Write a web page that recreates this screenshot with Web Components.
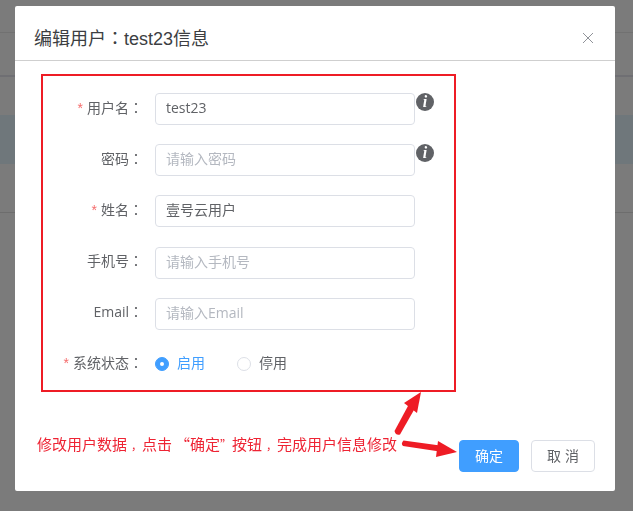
<!DOCTYPE html>
<html lang="zh-CN">
<head>
<meta charset="utf-8">
<title>编辑用户</title>
<style>
  html, body { margin: 0; height: 100%; overflow: hidden; }
  body {
    font-family: "Liberation Sans", "Noto Sans CJK SC", sans-serif;
    font-size: 14px;
    text-spacing-trim: space-all;
  }
  .colon { font-family: "Noto Sans CJK TC", sans-serif; }
  /* punctuation sits a little further right in the reference font */
  .comma { font-size: 11px; margin-left: 4px; }
  .open-quote { margin-left: 3px; }
  .close-quote { font-size: 12px; }
</style>
</head>
<body>
<page-backdrop></page-backdrop>
<edit-dialog>
  <span slot="heading">编辑用户<span class="colon" lang="zh-TW">：</span>test23信息</span>
  <user-form>
    <form-row label="用户名" required>
      <text-box value="test23"></text-box>
      <info-icon></info-icon>
    </form-row>
    <form-row label="密码">
      <text-box placeholder="请输入密码"></text-box>
      <info-icon></info-icon>
    </form-row>
    <form-row label="姓名" required>
      <text-box value="壹号云用户"></text-box>
    </form-row>
    <form-row label="手机号">
      <text-box placeholder="请输入手机号"></text-box>
    </form-row>
    <form-row label="Email">
      <text-box placeholder="请输入Email"></text-box>
    </form-row>
    <form-row label="系统状态" required>
      <radio-item checked>启用</radio-item>
      <radio-item>停用</radio-item>
    </form-row>
  </user-form>
  <span slot="note">修改用户数据<span class="comma">，</span>点击<span class="open-quote">“</span>确定<span class="close-quote">”</span>按钮<span class="comma">，</span>完成用户信息修改</span>
  <action-button slot="actions" primary>确定</action-button>
  <action-button slot="actions">取 消</action-button>
</edit-dialog>

<script>
class PageBackdrop extends HTMLElement {
  constructor() {
    super();
    this.attachShadow({ mode: "open" });
    this.shadowRoot.innerHTML = `
      <style>
        :host { display: block; position: fixed; inset: 0; background: #7b7b7b; }
        .row { border-bottom: 1px solid #717171; }
        .a { height: 32px; }
        .b { height: 42px; border-bottom: 2px solid #6f6f73; }
        .c { height: 38px; border: 0; }
        .band { height: 49px; background: #6f777b; border: 0; }
        .d { height: 48px; border-bottom: 1px solid #6d6d6d; }
      </style>
      <div class="row a"></div>
      <div class="row b"></div>
      <div class="row c"></div>
      <div class="row band"></div>
      <div class="row d"></div>
    `;
  }
}

class EditDialog extends HTMLElement {
  constructor() {
    super();
    this.attachShadow({ mode: "open" });
    this.shadowRoot.innerHTML = `
      <style>
        :host {
          display: flex;
          flex-direction: column;
          position: absolute;
          left: 15px;
          top: 6px;
          width: 600px;
          height: 485px;
          background: #fff;
          border-radius: 2px;
        }
        header {
          height: 55px;
          box-sizing: border-box;
          border-bottom: 1px solid #cfcfcf;
          display: flex;
          align-items: center;
          justify-content: space-between;
          padding: 10px 21px 0 19px;
          flex: none;
        }
        h2 { margin: 0 0 2px; font-size: 18px; font-weight: 400; color: #3c3e42; }
        svg { display: block; }
        .body { padding: 13px 0 0 26px; flex: none; }
        footer {
          display: flex;
          align-items: flex-start;
          justify-content: space-between;
          padding: 48px 20px 0 22px;
        }
        .note {
          color: #ee2434;
          font-family: "Noto Sans CJK SC", sans-serif;
          font-size: 15px;
          line-height: 22px;
          margin-top: -7px;
          white-space: nowrap;
        }
        .actions { display: flex; gap: 12px; }
        .arrows { position: absolute; left: 0; top: 0; pointer-events: none; }
      </style>
      <header>
        <h2><slot name="heading"></slot></h2>
        <svg width="12" height="12" viewBox="0 0 12 12" fill="none" stroke="#909399" stroke-width="1">
          <path d="M1 1 11 11M11 1 1 11"/>
        </svg>
      </header>
      <div class="body"><slot></slot></div>
      <footer>
        <div class="note"><slot name="note"></slot></div>
        <div class="actions"><slot name="actions"></slot></div>
      </footer>
      <svg class="arrows" width="600" height="485" viewBox="15 6 600 485" fill="#ee1c25">
        <path d="M394.500 431 408.500 405 414.500 409 400 434.500Q396 436 394.500 431Z"/>
        <path d="M421 392 404 403 417 413Z"/>
        <path d="M403.500 440.500 440 445.500 439.500 451.500 403 446Q400.500 443.500 403.500 440.500Z"/>
        <path d="M457 452 438 441 436 457Z"/>
      </svg>
    `;
  }
}

class UserForm extends HTMLElement {
  constructor() {
    super();
    this.attachShadow({ mode: "open" });
    this.shadowRoot.innerHTML = `
      <style>
        :host {
          display: flex;
          flex-direction: column;
          gap: 19.2px;
          box-sizing: border-box;
          width: 415px;
          height: 318px;
          padding-top: 17px;
          border: 2px solid #ee1c25;
        }
      </style>
      <slot></slot>
    `;
  }
}

class FormRow extends HTMLElement {
  constructor() {
    super();
    this.attachShadow({ mode: "open" });
    this.shadowRoot.innerHTML = `
      <style>
        :host { display: flex; height: 32px; align-items: center; }
        label {
          flex: none;
          width: 100px;
          margin-right: 12px;
          padding-bottom: 5px;
          text-align: right;
          color: #606266;
          font-family: "Open Sans", "Noto Sans CJK SC", sans-serif;
          font-size: 14px;
          white-space: nowrap;
        }
        .star { color: #f56c6c; margin-right: 4px; font-family: "Liberation Sans", sans-serif; }
        .colon { font-family: "Noto Sans CJK TC", sans-serif; }
      </style>
      <label><span class="star"></span><span class="text"></span><span class="colon" lang="zh-TW">：</span></label>
      <slot></slot>
    `;
    if (this.hasAttribute("required")) {
      this.shadowRoot.querySelector(".star").textContent = "*";
    }
    this.shadowRoot.querySelector(".text").textContent = this.getAttribute("label");
  }
}

class TextBox extends HTMLElement {
  constructor() {
    super();
    this.attachShadow({ mode: "open" });
    const value = this.getAttribute("value");
    this.shadowRoot.innerHTML = `
      <style>
        :host {
          display: flex;
          align-items: center;
          flex: none;
          box-sizing: border-box;
          width: 260px;
          height: 32px;
          padding: 0 10px 4px;
          border: 1px solid #dcdfe6;
          border-radius: 4px;
          font-family: "Open Sans", "Noto Sans CJK SC", sans-serif;
          font-size: 14px;
          color: ${value ? "#606266" : "#b4b8c0"};
        }
      </style>
      <span></span>
    `;
    this.shadowRoot.querySelector("span").textContent = value || this.getAttribute("placeholder");
  }
}

class InfoIcon extends HTMLElement {
  constructor() {
    super();
    this.attachShadow({ mode: "open" });
    this.shadowRoot.innerHTML = `
      <style>
        :host {
          display: flex;
          align-items: center;
          justify-content: center;
          align-self: flex-start;
          flex: none;
          width: 18px;
          height: 18px;
          margin-left: 1px;
          border-radius: 50%;
          background: #606266;
          color: #fff;
          font: italic 700 16px/18px "Liberation Serif", serif;
        }
      </style>
      i
    `;
  }
}

class RadioItem extends HTMLElement {
  constructor() {
    super();
    this.attachShadow({ mode: "open" });
    const on = this.hasAttribute("checked");
    this.shadowRoot.innerHTML = `
      <style>
        :host {
          display: inline-flex;
          align-items: center;
          gap: 8px;
          margin-right: 32px;
          margin-top: -2px;
          font-size: 14px;
          color: ${on ? "#409eff" : "#606266"};
        }
        i {
          box-sizing: border-box;
          width: 14px;
          height: 14px;
          border-radius: 50%;
          display: flex;
          align-items: center;
          justify-content: center;
          border: 1px solid ${on ? "#409eff" : "#dcdfe6"};
          background: ${on ? "#409eff" : "#fff"};
        }
        i::after {
          content: "";
          width: 4px;
          height: 4px;
          border-radius: 50%;
          background: #fff;
          display: ${on ? "block" : "none"};
        }
        span { padding-bottom: 3px; }
      </style>
      <i></i><span><slot></slot></span>
    `;
  }
}

class ActionButton extends HTMLElement {
  constructor() {
    super();
    this.attachShadow({ mode: "open" });
    const primary = this.hasAttribute("primary");
    this.shadowRoot.innerHTML = `
      <style>
        :host {
          display: flex;
          align-items: center;
          justify-content: center;
          box-sizing: border-box;
          height: 32px;
          width: ${primary ? 60 : 64}px;
          padding-bottom: 2px;
          border-radius: 4px;
          border: 1px solid ${primary ? "#409eff" : "#dcdfe6"};
          background: ${primary ? "#409eff" : "#fff"};
          color: ${primary ? "#fff" : "#606266"};
          font-size: 14px;
        }
      </style>
      <slot></slot>
    `;
  }
}

customElements.define("page-backdrop", PageBackdrop);
customElements.define("edit-dialog", EditDialog);
customElements.define("user-form", UserForm);
customElements.define("form-row", FormRow);
customElements.define("text-box", TextBox);
customElements.define("info-icon", InfoIcon);
customElements.define("radio-item", RadioItem);
customElements.define("action-button", ActionButton);
</script>
</body>
</html>
